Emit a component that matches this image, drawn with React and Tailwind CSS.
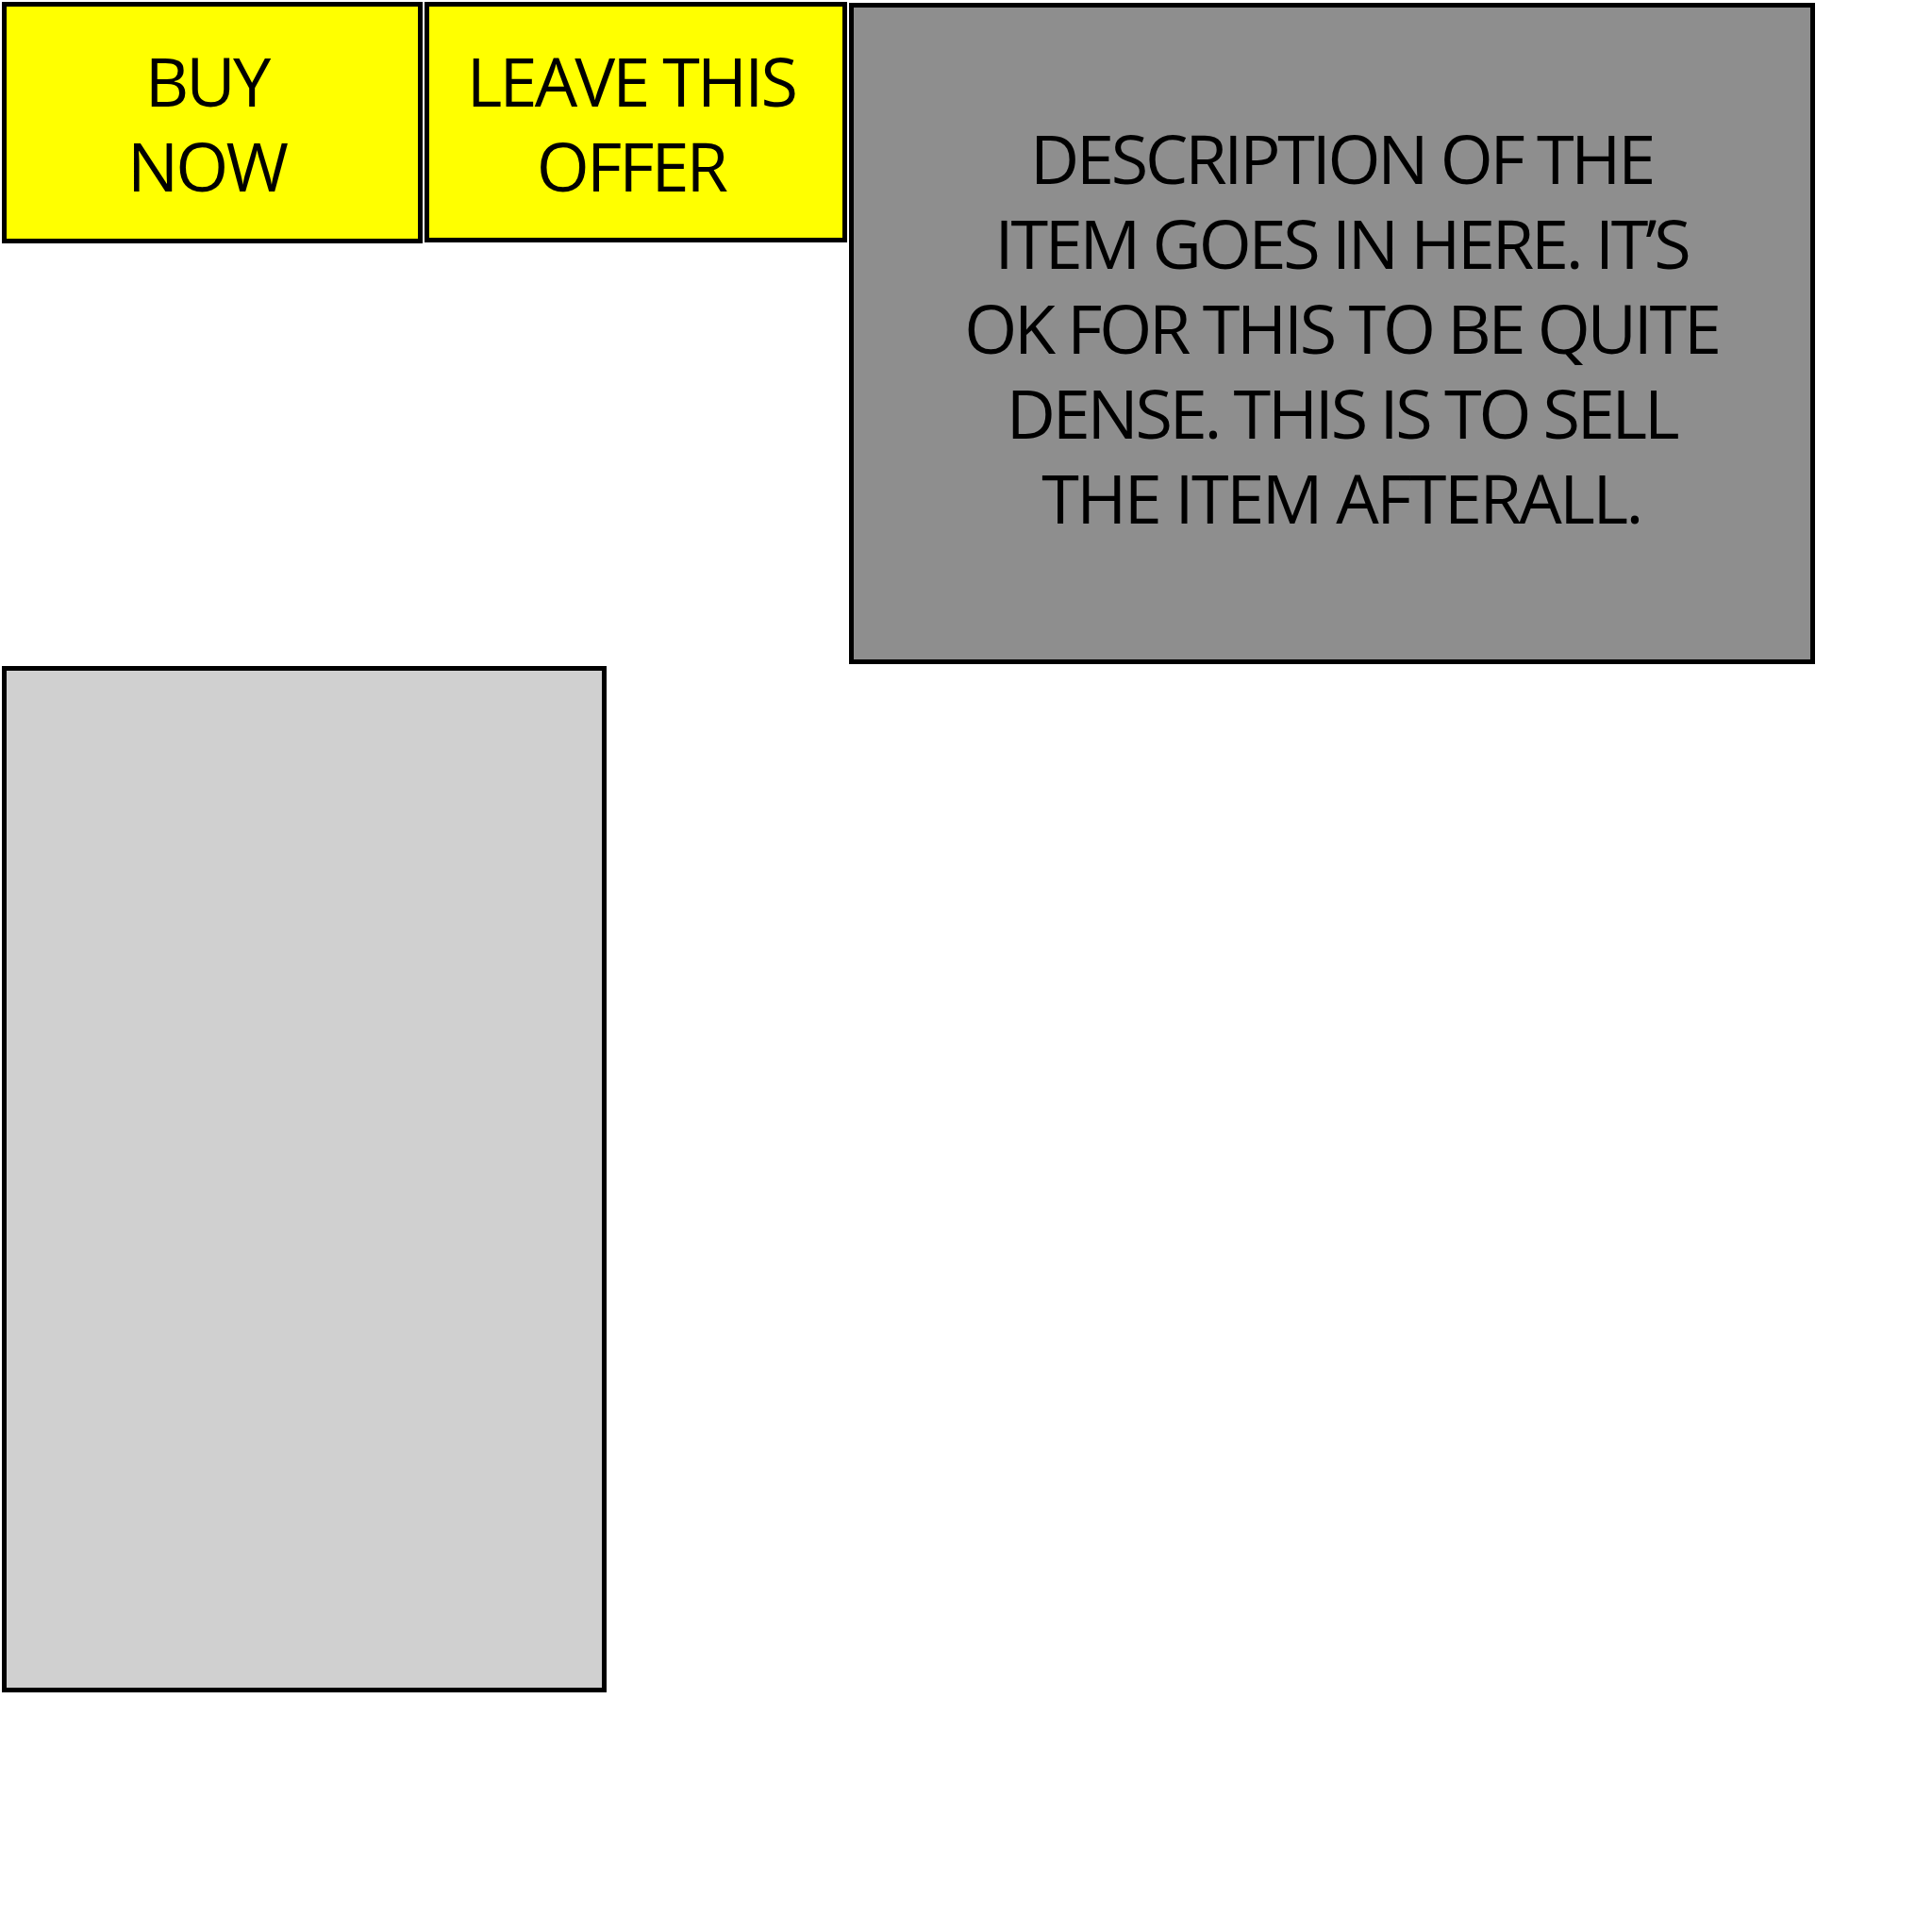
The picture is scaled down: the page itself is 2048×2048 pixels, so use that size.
export default function App() {
  return (
    <div className="bg-white w-[2048px] h-[2048px] p-[2px] font-['Open_Sans',sans-serif] text-black text-[72px] leading-[90px] tracking-[-0.04em]">
      <div className="flex items-start gap-[2px]">
        <button className="w-[446px] h-[256px] bg-[#ffff00] border-[5px] border-black flex items-center justify-center text-center pr-[12px]">
          BUY<br />NOW
        </button>
        <button className="w-[448px] h-[255px] bg-[#ffff00] border-[5px] border-black flex items-center justify-center text-center pr-[10px]">
          LEAVE THIS<br />OFFER
        </button>
        <div className="w-[1024px] h-[701px] mt-[1px] bg-[#8e8e8e] border-[5px] border-black flex justify-center text-center pt-[114px] pl-[20px] tracking-[-0.045em]">
          <p>
            DESCRIPTION OF THE<br />
            ITEM GOES IN HERE. IT’S<br />
            OK FOR THIS TO BE QUITE<br />
            DENSE. THIS IS TO SELL<br />
            <span className="tracking-[-0.035em]">THE ITEM AFTERALL.</span>
          </p>
        </div>
      </div>
      <div className="w-[641px] h-[1088px] mt-[2px] bg-[#d0d0d0] border-[5px] border-black" />
    </div>
  )
}
